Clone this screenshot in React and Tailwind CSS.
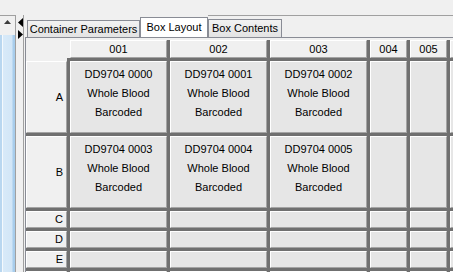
import React from 'react';

const font = { fontFamily: '"Liberation Sans", Arial, sans-serif' };

// last column/row only peek in at the edge, so they carry no label
const columns = ['001', '002', '003', '004', '005', ''];
const rows = [
    { label: 'A', tall: true },
    { label: 'B', tall: true },
    { label: 'C' },
    { label: 'D' },
    { label: 'E' },
    { label: '' },
];

// sample ids for the filled slots
const contents = {
    'A-0': 'DD9704 0000',
    'A-1': 'DD9704 0001',
    'A-2': 'DD9704 0002',
    'B-0': 'DD9704 0003',
    'B-1': 'DD9704 0004',
    'B-2': 'DD9704 0005',
};

const edge = 'border border-t-white border-l-white border-r-[#a4a4a4] border-b-[#a4a4a4]';

const Triangle = ({ dir }) => (
    <svg width="5" height="9" viewBox="0 0 5 9">
        {dir === 'left' ? <polygon points="5,0 0,4.5 5,9" fill="#000" /> : <polygon points="0,0 5,4.5 0,9" fill="#000" />}
    </svg>
);

const Tab = ({ label, active, className = '' }) => (
    <div
        className={`flex items-center justify-center border border-b-0 border-[#898c95] text-[11px] text-black ${
            active ? 'bg-white h-[20px]' : 'bg-gradient-to-b from-[#f2f2f2] to-[#e3e3e3]'
        } ${className}`}
    >
        {label}
    </div>
);

export default function App() {
    return (
        <div className="flex h-[272px] w-[453px] overflow-hidden bg-[#f0f0f0]" style={font}>
            {/* left scroll strip */}
            <div className="mt-[15px] flex w-[16px] shrink-0 flex-col border-t border-r border-[#a0a0a0]">
                <div className="flex h-[19px] items-start justify-center pt-[4px]">
                    <svg width="7" height="4" viewBox="0 0 7 4">
                        <polygon points="0,4 3.5,0 7,4" fill="#3c3c3c" />
                    </svg>
                </div>
                <div className="flex-1 bg-[linear-gradient(to_right,#b9d7f0_0,#b9d7f0_2px,#f4f9fd_2px,#f4f9fd_3px,#d8eaf9_3px,#d2e6f7_12px,#a8cdec_13px,#a8cdec_15px)]" />
            </div>

            {/* collapse arrows */}
            <div className="flex w-[7px] shrink-0 flex-col gap-[3px] pt-[18px] pl-[2px]">
                <Triangle dir="left" />
                <Triangle dir="right" />
            </div>

            {/* tab area */}
            <div className="mt-[15px] flex min-w-0 flex-1 flex-col border-l border-[#a0a0a0]">
                <div className="flex h-[22px] items-end pl-[3px]">
                    <Tab label="Container Parameters" className="h-[17px] w-[113px]" />
                    <Tab label="Box Layout" active className="w-[68px]" />
                    <div className="flex h-[22px] flex-1 items-end border-t border-[#a0a0a0]">
                        <Tab label="Box Contents" className="h-[18px] w-[74px]" />
                    </div>
                </div>

                <div className="ml-[1px] flex-1 border-t border-l border-[#898c95] pt-[2px]">
                    <div className="grid w-max grid-cols-[41px_97px_97px_97px_37px_37px_37px] grid-rows-[18px_72px_72px_17px_17px_17px_17px] gap-[3px] bg-[#707070] text-[11px] text-black">
                        <div className="bg-[#f0f0f0] shadow-[0_3px_0_#f0f0f0,3px_0_0_#f0f0f0]" />
                        {columns.map((c, i) => (
                            <div key={i} className={`flex items-center justify-center bg-[#f0f0f0] ${edge}`}>
                                {c}
                            </div>
                        ))}

                        {rows.map((r, ri) => (
                            <React.Fragment key={ri}>
                                <div className={`flex items-center justify-end bg-[#f0f0f0] pr-[3px] ${edge}`}>{r.label}</div>
                                {columns.map((c, i) => (
                                    <div key={i} className={`flex flex-col items-center bg-[#e6e6e6] pt-[3px] leading-[19px] ${edge}`}>
                                        {contents[`${r.label}-${i}`] && (
                                            <>
                                                <span>{contents[`${r.label}-${i}`]}</span>
                                                <span>Whole Blood</span>
                                                <span>Barcoded</span>
                                            </>
                                        )}
                                    </div>
                                ))}
                            </React.Fragment>
                        ))}
                    </div>
                </div>
            </div>
        </div>
    );
}
